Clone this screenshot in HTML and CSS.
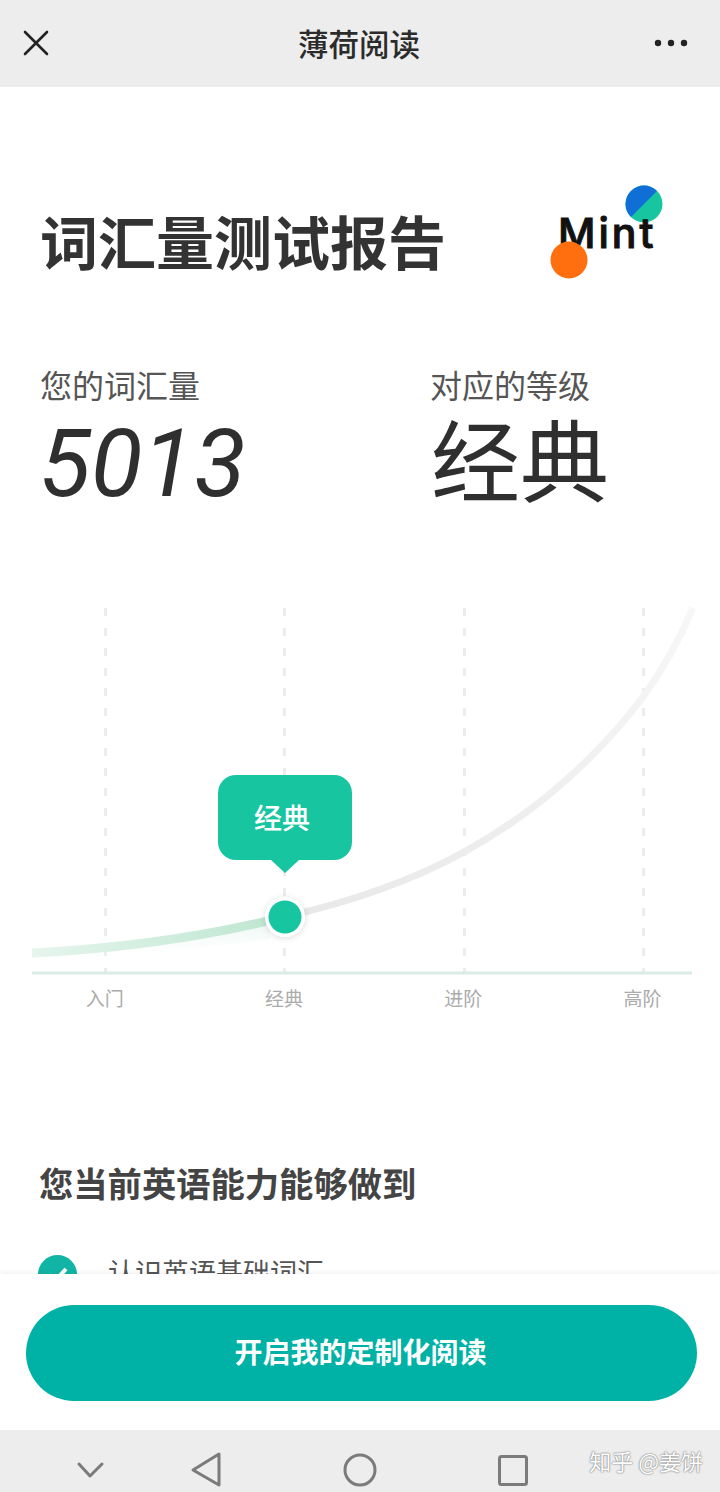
FILE: index.html
```html
<!DOCTYPE html>
<html lang="zh-CN">
<head>
  <meta charset="UTF-8" />
  <meta name="viewport" content="width=device-width, initial-scale=1.0"/>
  <title>薄荷阅读</title>
  <link rel="stylesheet" href="styles.css">
</head>
<body>
  <div class="page">

    <!-- Top bar -->
    <header class="top-bar">
      <svg class="top-icon" width="32" height="32" viewBox="0 0 32 32">
        <path d="M5 4 L27 26 M27 4 L5 26" stroke="#222" stroke-width="2.6" stroke-linecap="round" fill="none"/>
      </svg>
      <div class="top-title">薄荷阅读</div>
      <svg class="top-icon" width="36" height="32" viewBox="0 0 36 32">
        <circle cx="5" cy="15" r="3.2" fill="#222"/>
        <circle cx="18" cy="15" r="3.2" fill="#222"/>
        <circle cx="31" cy="15" r="3.2" fill="#222"/>
      </svg>
    </header>

    <main class="report">
      <div class="report-head">
        <h1 class="report-title">词汇量测试报告</h1>
        <svg class="logo" width="120" height="110" viewBox="0 0 120 110">
          <defs>
            <clipPath id="logoDot"><circle cx="99" cy="19" r="18.500"/></clipPath>
          </defs>
          <circle cx="99" cy="19" r="18.500" fill="#17c5a0"/>
          <path d="M70 -10 H128 L70 48 Z" fill="#0f6fd6" clip-path="url(#logoDot)"/>
          <text class="logo-text" x="13" y="63">Mint</text>
          <circle cx="24" cy="75" r="18.500" fill="#ff6f0f"/>
        </svg>
      </div>

      <div class="stats">
        <div>
          <div class="stat-label">您的词汇量</div>
          <div class="stat-number">5013</div>
        </div>
        <div>
          <div class="stat-label">对应的等级</div>
          <div class="stat-level">经典</div>
        </div>
      </div>

      <!-- Growth chart -->
      <div class="chart">
        <svg class="chart-svg" width="720" height="380" viewBox="0 0 720 380">
          <defs>
            <linearGradient id="doneLine" x1="0" x2="1" y1="0" y2="0">
              <stop offset="0" stop-color="#e6f5ee"/>
              <stop offset="1" stop-color="#bde6cf"/>
            </linearGradient>
            <linearGradient id="doneFade" x1="0" x2="0" y1="0" y2="1">
              <stop offset="0" stop-color="#e6f5ee" stop-opacity="0.7"/>
              <stop offset="1" stop-color="#ffffff" stop-opacity="0"/>
            </linearGradient>
            <linearGradient id="restLine" x1="0" x2="1" y1="1" y2="0">
              <stop offset="0" stop-color="#e8e8e8"/>
              <stop offset="0.5" stop-color="#efefef"/>
              <stop offset="1" stop-color="#f7f7f7"/>
            </linearGradient>
            <filter id="dotShadow" x="-50%" y="-50%" width="200%" height="200%">
              <feDropShadow dx="0" dy="1" stdDeviation="3" flood-color="#000" flood-opacity="0.14"/>
            </filter>
          </defs>
          <g class="grid-lines">
            <line x1="105.500" y1="8" x2="105.500" y2="372"/>
            <line x1="284.500" y1="8" x2="284.500" y2="372"/>
            <line x1="464.500" y1="8" x2="464.500" y2="372"/>
            <line x1="643.500" y1="8" x2="643.500" y2="372"/>
          </g>
          <path d="M284 317 C350 302 410 282 464 252 C535 213 595 160 643 97 C664 68 680 38 693 8" fill="none" stroke="url(#restLine)" stroke-width="7"/>
          <path d="M32 357 C110 353 200 342 270 325 L270 340 L32 364 Z" fill="url(#doneFade)"/>
          <path d="M32 353 C110 349 200 338 284 317" fill="none" stroke="url(#doneLine)" stroke-width="9"/>
          <line x1="32" y1="373" x2="692" y2="373" stroke="#dcebe7" stroke-width="3"/>
          <circle cx="285" cy="317" r="20" fill="#fff" filter="url(#dotShadow)"/>
          <circle cx="285" cy="317" r="16.500" fill="#17c5a0"/>
        </svg>
        <div class="bubble">经典</div>
      </div>
      <div class="axis-labels">
        <span>入门</span>
        <span>经典</span>
        <span>进阶</span>
        <span>高阶</span>
      </div>

      <h2 class="section-title">您当前英语能力能够做到</h2>
      <div class="ability">
        <svg width="39" height="39" viewBox="0 0 39 39">
          <circle cx="19.500" cy="19.500" r="19.500" fill="#12b5a5"/>
          <path d="M11 20 L17 26 L28 14" fill="none" stroke="#fff" stroke-width="4"/>
        </svg>
        <span>认识英语基础词汇</span>
      </div>
    </main>

    <!-- Bottom action -->
    <div class="action-bar">
      <button class="start-button">开启我的定制化阅读</button>
    </div>

    <!-- Android nav bar -->
    <nav class="nav-bar">
      <svg width="720" height="62" viewBox="0 0 720 62">
        <g fill="none" stroke="#7b7b7b" stroke-width="3" stroke-linejoin="round" stroke-linecap="round">
          <path d="M79 34 L90 46 L102 34"/>
          <path d="M219 24 L193 40 L219 55 Z"/>
          <circle cx="360" cy="40" r="15"/>
          <rect x="499.500" y="26.500" width="27" height="28" rx="2"/>
        </g>
      </svg>
      <div class="watermark">知乎 @姜饼</div>
    </nav>
  </div>
</body>
</html>
```

FILE: styles.css
```css
* {
  box-sizing: border-box;
}

body {
  margin: 0;
  background: white;
  font-family: "Noto Sans CJK SC", "Noto Sans", sans-serif;
}

.page {
  display: flex;
  flex-direction: column;
  width: 720px;
  height: 1492px;
  overflow: hidden;
}

.top-bar {
  display: flex;
  justify-content: space-between;
  align-items: center;
  flex-shrink: 0;
  height: 87px;
  padding: 0 31px 0 20px;
  background: #ededed;
}

.top-title {
  padding-bottom: 2px;
  margin-left: 13px;
  font-size: 30.5px;
  font-weight: 500;
  color: #2b2b2b;
}

.top-icon {
  display: block;
}

.report {
  flex: 1;
  min-height: 0;
  overflow: hidden;
}

.report-head {
  display: flex;
  justify-content: space-between;
  align-items: center;
  padding: 98px 55px 0 40px;
}

.report-title {
  margin: 0;
  font-size: 58px;
  line-height: 70px;
  font-weight: 700;
  color: #333;
}

.logo {
  display: block;
}

.logo-text {
  font-family: Inter, sans-serif;
  font-size: 41px;
  font-weight: 500;
  letter-spacing: 3px;
  fill: #111;
  stroke: #111;
  stroke-width: 1px;
}

.stats {
  display: grid;
  grid-template-columns: 390px 1fr;
  padding: 69px 0 0 40px;
}

.stat-label {
  font-size: 32px;
  line-height: 40px;
  color: #555;
}

.stat-number {
  margin-left: -1px;
  font-family: Roboto, sans-serif;
  font-size: 95px;
  font-style: italic;
  line-height: 120px;
  color: #2f2f2f;
}

.stat-level {
  margin-left: 1px;
  font-size: 89px;
  line-height: 106px;
  color: #2f2f2f;
}

.chart {
  position: relative;
  margin-top: 76px;
  height: 380px;
}

.chart-svg {
  display: block;
}

.grid-lines line {
  stroke: #ececec;
  stroke-width: 3;
  stroke-dasharray: 8 12;
}

.bubble {
  position: absolute;
  left: 218px;
  top: 175px;
  width: 134px;
  height: 85px;
  padding-right: 6px;
  border-radius: 18px;
  background: #17c5a0;
  color: white;
  font-size: 28px;
  font-weight: 500;
  line-height: 85px;
  text-align: center;
}

.bubble::after {
  content: "";
  position: absolute;
  left: 53px;
  bottom: -13px;
  border-left: 14px solid transparent;
  border-right: 14px solid transparent;
  border-top: 13px solid #17c5a0;
}

.axis-labels {
  display: grid;
  grid-template-columns: repeat(4, 179.3px);
  padding: 5px 0 0 15px;
  font-size: 19px;
  line-height: 26px;
  color: #ababab;
  text-align: center;
}

.section-title {
  margin: 149px 0 0;
  padding-left: 39px;
  font-size: 34.3px;
  line-height: 44px;
  font-weight: 700;
  color: #444;
}

.ability {
  display: flex;
  align-items: flex-start;
  gap: 31px;
  margin-top: 51px;
  padding-left: 38px;
  font-size: 27px;
  line-height: 36px;
  color: #555;
}

.ability span {
  margin-top: -1px;
}

.action-bar {
  flex-shrink: 0;
  height: 156px;
  padding: 31px 23px 0 26px;
  background: white;
  box-shadow: 0 -1px 5px rgba(0, 0, 0, 0.07);
  position: relative;
}

.start-button {
  display: block;
  width: 100%;
  height: 96px;
  padding: 0 2px 4px 0;
  border: none;
  border-radius: 48px;
  background: #00b1a6;
  color: white;
  font-family: inherit;
  font-size: 28px;
  font-weight: 700;
}

.nav-bar {
  position: relative;
  flex-shrink: 0;
  height: 62px;
  background: #ededed;
}

.nav-bar svg {
  display: block;
}

.watermark {
  position: absolute;
  top: 15px;
  right: 17px;
  font-size: 22px;
  line-height: 30px;
  color: white;
  text-shadow: 0 0 2px #777, 0 0 1px #777;
}
```
